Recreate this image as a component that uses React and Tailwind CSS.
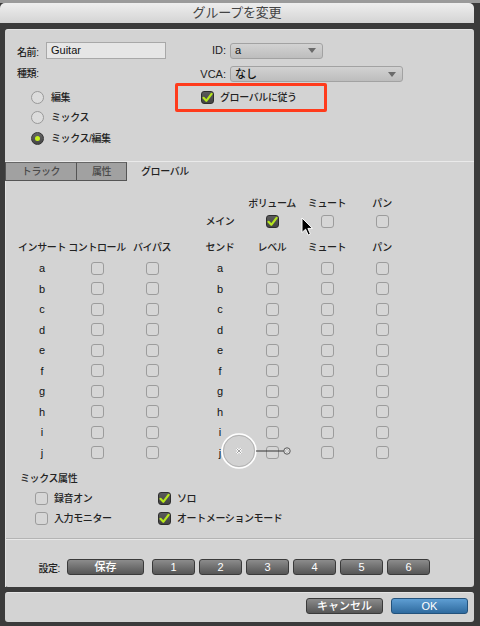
import React from 'react';

const cjk = "font-['Liberation_Sans','Noto_Sans_CJK_JP',sans-serif]";

function Check({ on }) {
  if (on) {
    return (
      <div className="w-[13px] h-[13px] rounded-[3px] border border-[#2e2e2e] bg-gradient-to-b from-[#5a5a5a] to-[#444] flex items-center justify-center shrink-0">
        <svg width="11" height="11" viewBox="0 0 11 11">
          <path d="M1.5 5.8 L4.3 8.8 L9.6 1.8" fill="none" stroke="#b6e61e" strokeWidth="2.2" strokeLinecap="round" strokeLinejoin="round" />
        </svg>
      </div>
    );
  }
  return <div className="w-[13px] h-[13px] rounded-[3px] border border-[#9c9c9c] bg-[#d6d6d6] shrink-0" />;
}

function Radio({ on, label }) {
  return (
    <div className="h-[20.5px] flex items-center pl-[14px] gap-[7px]">
      {on ? (
        <div className="w-[13px] h-[13px] rounded-full border border-[#333] bg-gradient-to-b from-[#666] to-[#444] flex items-center justify-center">
          <div className="w-[5px] h-[5px] rounded-full bg-[#c6f21a]" />
        </div>
      ) : (
        <div className="w-[13px] h-[13px] rounded-full border border-[#999] bg-[#dcdcdc]" />
      )}
      <span className="text-[10px] font-medium tracking-[-0.4px] text-[#222]">{label}</span>
    </div>
  );
}

function Select({ w, value }) {
  return (
    <div className={`${w} h-[16px] rounded-[3px] border border-[#a2a2a2] bg-gradient-to-b from-[#d2d2d2] to-[#bdbdbd] flex items-center justify-between pl-[4px] pr-[6px]`}>
      <span className="text-[11px] font-medium text-[#111]">{value}</span>
      <svg width="8" height="5" viewBox="0 0 8 5">
        <path d="M0 0 L8 0 L4 5 Z" fill="#6a6a6a" />
      </svg>
    </div>
  );
}

function Label({ children }) {
  return <span className="text-[10px] font-medium tracking-[-0.4px] text-[#222]">{children}</span>;
}

function Cell({ children }) {
  return <div className="flex items-center justify-center whitespace-nowrap">{children}</div>;
}

function DarkBtn({ w, children, blue }) {
  const tone = blue
    ? 'border-[#23527c] from-[#5e9ed3] to-[#2f6b9f]'
    : 'border-[#3a3a3a] from-[#8c8c8c] to-[#565656]';
  return (
    <div className={`${w} h-[16px] rounded-[3px] border bg-gradient-to-b ${tone} flex items-center justify-center text-[11px] font-medium text-white`}>
      {children}
    </div>
  );
}

const letters = ['a', 'b', 'c', 'd', 'e', 'f', 'g', 'h', 'i', 'j'];
const gridCols = 'grid grid-cols-[60px_50px_60px_76px_28px_82px_28px]';

export default function App() {
  return (
    <div className={`w-[480px] h-[626px] bg-[#3b3b3b] relative overflow-hidden flex flex-col ${cjk} text-[#222]`}>
      <div className="h-[3px] bg-[#9a9a9a]" />

      {/* Title bar */}
      <div className="h-[20px] mr-[6px] rounded-t-[5px] bg-gradient-to-b from-[#eeeeee] to-[#d4d4d4] flex items-center justify-center">
        <span className="text-[13px] tracking-[-0.2px] text-[#444]">グループを変更</span>
      </div>
      <div className="h-[6px]" />

      {/* Main panel */}
      <div className="h-[558px] ml-[5px] mr-[6px] rounded-[3px] bg-[#d3d3d3] border-t border-[#e4e4e4] flex flex-col">
        {/* Upper section */}
        <div className="h-[131px] flex pt-[12px]">
          <div className="w-[170px] pl-[12px] flex flex-col">
            <div className="h-[17px] flex items-center">
              <span className="w-[29px]"><Label>名前:</Label></span>
              <div className="w-[120px] h-[17px] border border-[#a8a8a8] bg-[#e6e6e6] flex items-center pl-[4px]">
                <span className="text-[11px] font-medium text-[#111]">Guitar</span>
              </div>
            </div>
            <div className="h-[16px] mt-[6px] flex items-center">
              <Label>種類:</Label>
            </div>
            <div className="mt-[6px] flex flex-col">
              <Radio label="編集" />
              <Radio label="ミックス" />
              <Radio on label="ミックス/編集" />
            </div>
          </div>

          <div className="flex flex-col">
            <div className="h-[17px] flex items-center gap-[4px]">
              <span className="w-[51px] text-right text-[11px] font-medium">ID:</span>
              <Select w="w-[93px]" value="a" />
            </div>
            <div className="h-[16px] mt-[7px] flex items-center gap-[4px]">
              <span className="w-[51px] text-right text-[11px] font-medium">VCA:</span>
              <Select w="w-[173px]" value="なし" />
            </div>
            <div className="w-[152px] h-[29px] mt-[1px] border-[3px] border-[#ff3b1c] rounded-[2px] flex items-center pl-[23px] gap-[6px]">
              <Check on />
              <Label>グローバルに従う</Label>
            </div>
          </div>
        </div>

        {/* Tabs */}
        <div className="h-[20px] flex border-t border-[#eaeaea]">
          <div className="w-[72px] bg-[#a1a1a1] border border-[#555] border-t-[#666] flex items-center justify-center text-[10px] font-medium tracking-[-0.4px] text-[#4a4a4a]">トラック</div>
          <div className="w-[50px] bg-[#a1a1a1] border border-l-0 border-[#555] border-t-[#666] flex items-center justify-center text-[10px] font-medium tracking-[-0.4px] text-[#4a4a4a]">属性</div>
          <div className="pl-[14px] flex items-center"><Label>グローバル</Label></div>
        </div>

        {/* Tab content */}
        <div className="flex-1 flex flex-col border-l border-[#e2e2e2]">
          <div className={`${gridCols} ml-[6px] mt-[13px] auto-rows-[18px]`}>
            <div /><div /><div /><div />
            <Cell><Label>ボリューム</Label></Cell>
            <Cell><Label>ミュート</Label></Cell>
            <Cell><Label>パン</Label></Cell>

            <div /><div /><div />
            <Cell><Label>メイン</Label></Cell>
            <Cell><Check on /></Cell>
            <Cell><Check /></Cell>
            <Cell><Check /></Cell>
          </div>

          <div className={`${gridCols} ml-[6px] mt-[8px] h-[18px]`}>
            {['インサート', 'コントロール', 'バイパス', 'センド', 'レベル', 'ミュート', 'パン'].map((t, i) => (
              <Cell key={i}><Label>{t}</Label></Cell>
            ))}
          </div>

          <div className={`${gridCols} ml-[6px] mt-[2px] auto-rows-[20.5px]`}>
            {letters.map((l) => (
              <React.Fragment key={l}>
                <Cell><span className="text-[11px] font-medium text-[#111]">{l}</span></Cell>
                <Cell><Check /></Cell>
                <Cell><Check /></Cell>
                <Cell><span className="text-[11px] font-medium text-[#111]">{l}</span></Cell>
                <Cell><Check /></Cell>
                <Cell><Check /></Cell>
                <Cell><Check /></Cell>
              </React.Fragment>
            ))}
          </div>

          {/* Mix attributes */}
          <div className="h-[16px] mt-[7px] pl-[14px] flex items-center">
            <Label>ミックス属性</Label>
          </div>
          <div className="mt-[2px] pl-[29px] grid grid-cols-[123px_1fr] auto-rows-[20px]">
            <div className="flex items-center gap-[6px]"><Check /><Label>録音オン</Label></div>
            <div className="flex items-center gap-[6px]"><Check on /><Label>ソロ</Label></div>
            <div className="flex items-center gap-[6px]"><Check /><Label>入力モニター</Label></div>
            <div className="flex items-center gap-[6px]"><Check on /><Label>オートメーションモード</Label></div>
          </div>

          <div className="mt-[10px] border-t border-[#b4b4b4] border-b border-b-[#e8e8e8]" />

          {/* Settings row */}
          <div className="mt-[15px] flex items-center">
            <span className="w-[55px] text-right pr-[1px]"><Label>設定:</Label></span>
            <div className="ml-[6px]"><DarkBtn w="w-[77px]">保存</DarkBtn></div>
            <div className="ml-[8px] flex gap-[4px]">
              {['1', '2', '3', '4', '5', '6'].map((n) => (
                <DarkBtn key={n} w="w-[43px]">{n}</DarkBtn>
              ))}
            </div>
          </div>
        </div>
      </div>

      <div className="h-[5px]" />

      {/* Bottom bar */}
      <div className="h-[30px] ml-[5px] mr-[6px] rounded-[3px] bg-[#d3d3d3] border-t border-[#e4e4e4] flex items-start justify-end pt-[5px] pr-[6px] gap-[8px]">
        <DarkBtn w="w-[77px]">キャンセル</DarkBtn>
        <DarkBtn w="w-[77px]" blue>OK</DarkBtn>
      </div>
      <div className="flex-1" />

      {/* Drag "poof" indicator */}
      <svg className="absolute left-[218px] top-[430px]" width="76" height="44" viewBox="0 0 76 44">
        <circle cx="21" cy="21" r="17" fill="rgba(210,210,210,0.35)" stroke="#ffffff" strokeWidth="1.6" />
        <circle cx="21" cy="21" r="15.6" fill="none" stroke="#a0a0a0" strokeWidth="0.6" />
        <path d="M18.5 18.5 L23.5 23.5 M23.5 18.5 L18.5 23.5" stroke="#ffffff" strokeWidth="2" />
        <path d="M18.5 18.5 L23.5 23.5 M23.5 18.5 L18.5 23.5" stroke="#8a8a8a" strokeWidth="0.8" />
        <line x1="38" y1="21" x2="66" y2="21" stroke="#333" strokeWidth="1" />
        <circle cx="69" cy="21" r="3.2" fill="#eee" stroke="#555" strokeWidth="1" />
        <circle cx="69" cy="21" r="1.5" fill="none" stroke="#999" strokeWidth="0.6" />
      </svg>

      {/* Mouse cursor */}
      <svg className="absolute left-[301px] top-[217px]" width="13" height="20" viewBox="0 0 13 20">
        <path d="M1 1 L1 15.5 L4.6 12.2 L7.2 18 L9.4 17 L6.9 11.4 L11.5 11.4 Z" fill="#000" stroke="#fff" strokeWidth="1" strokeLinejoin="round" />
      </svg>
    </div>
  );
}
